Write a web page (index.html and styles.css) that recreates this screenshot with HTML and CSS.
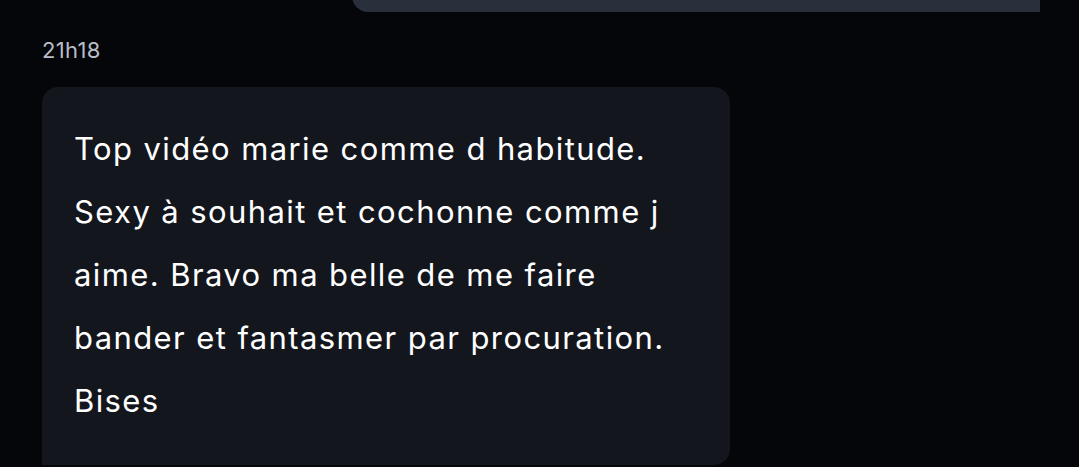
FILE: index.html
```html
<!DOCTYPE html>
<html>
<head>
    <title>Messages</title>
    <link rel="stylesheet" href="styles.css">
</head>
<body>
    <div class="thread">
        <div class="bubble sent"></div>
        <div class="time">21h18</div>
        <div class="bubble received">
            <p>Top vidéo marie comme d habitude.<br>Sexy à souhait et cochonne comme j<br>aime. Bravo ma belle de me faire<br>bander et fantasmer par procuration.<br>Bises</p>
        </div>
    </div>
</body>
</html>
```
FILE: styles.css
```css
body { margin: 0; background-color: #05060a; font-family: Inter, "Open Sans", sans-serif; color: #fff; overflow: hidden; }
.thread { display: flex; flex-direction: column; padding: 0 39px 0 42px; }
.bubble { width: 688px; box-sizing: border-box; border-radius: 16px; }
.sent { align-self: flex-end; height: 60px; margin-top: -48px; background-color: #29303b; border-radius: 16px 0 0 16px; }
.time { margin-top: 24px; font-size: 22px; line-height: 28px; color: #b9bdc5; letter-spacing: 0.3px; }
.received { margin-top: 23px; background-color: #13161d; padding: 30px 32px 33px; border-radius: 16px 16px 16px 0; }
.received p { margin: 0; font-size: 31px; line-height: 63px; letter-spacing: 1.4px; white-space: nowrap; }
```
